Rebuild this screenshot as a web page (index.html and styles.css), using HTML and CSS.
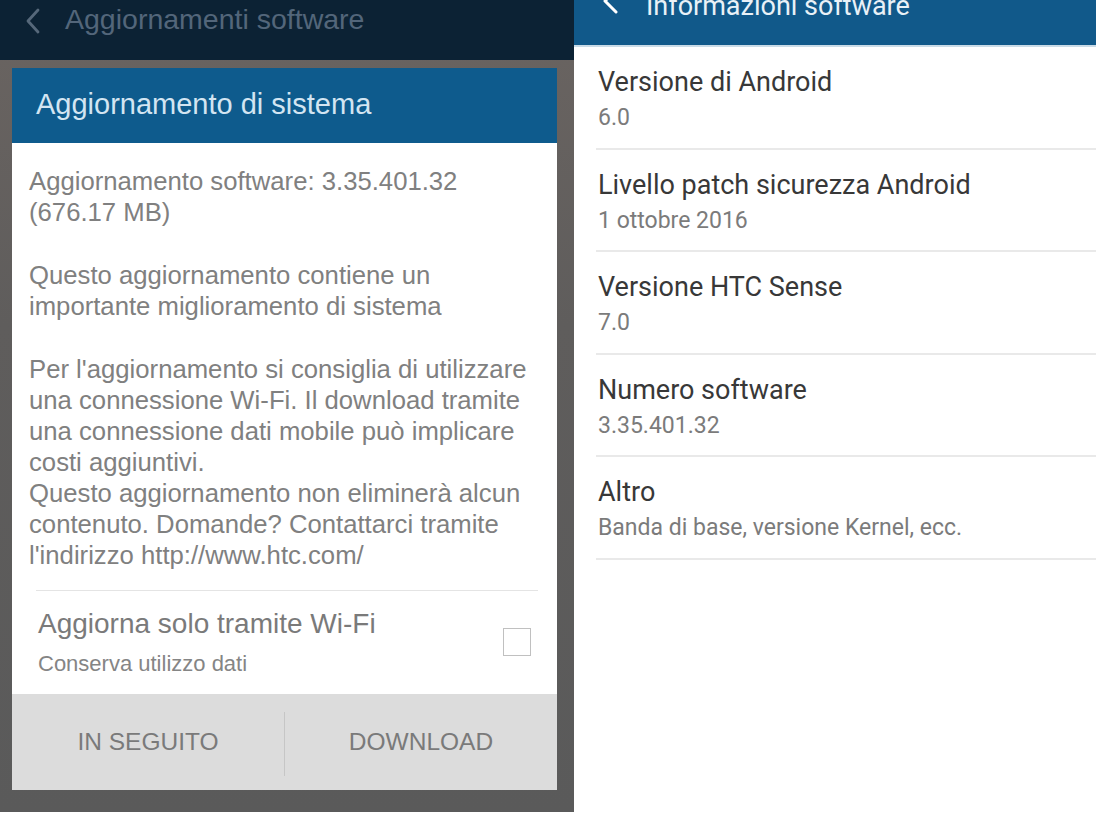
FILE: index.html
```html
<!DOCTYPE html>
<html lang="it">
<head>
<meta charset="utf-8">
<title>Aggiornamento software</title>
<link rel="stylesheet" href="styles.css">
</head>
<body>
  <section class="left">
    <header class="nav-dark">
      <svg class="chev" width="16" height="26" viewBox="0 0 16 26"><path d="M13 2 L3 13 L13 24" fill="none" stroke="#56687a" stroke-width="2.8" stroke-linecap="round" stroke-linejoin="round"/></svg>
      <span class="nav-title">Aggiornamenti software</span>
    </header>
    <div class="dialog">
      <div class="dlg-head">Aggiornamento di sistema</div>
      <div class="dlg-body">
        <p>Aggiornamento software: 3.35.401.32<br>(676.17 MB)</p>
        <p>Questo aggiornamento contiene un<br>importante miglioramento di sistema</p>
        <p>Per l'aggiornamento si consiglia di utilizzare<br>una connessione Wi-Fi. Il download tramite<br>una connessione dati mobile può implicare<br>costi aggiuntivi.<br>Questo aggiornamento non eliminerà alcun<br>contenuto. Domande? Contattarci tramite<br>l'indirizzo http://www.htc.com/</p>
        <div class="option">
          <div class="opt-text">
            <div class="opt-title">Aggiorna solo tramite Wi-Fi</div>
            <div class="opt-sub">Conserva utilizzo dati</div>
          </div>
          <span class="checkbox"></span>
        </div>
      </div>
      <div class="dlg-buttons">
        <div class="btn">IN SEGUITO</div>
        <span class="vsep"></span>
        <div class="btn">DOWNLOAD</div>
      </div>
    </div>
  </section>
  <section class="right">
    <header class="nav-blue">
      <svg class="chev-w" width="18" height="28" viewBox="0 0 18 28"><path d="M15 3 L4 14 L15 25" fill="none" stroke="#ffffff" stroke-width="3" stroke-linecap="round" stroke-linejoin="round"/></svg>
      <span class="nav-title-w">Informazioni software</span>
    </header>
    <ul class="list">
      <li class="item"><div class="it-title">Versione di Android</div><div class="it-sub">6.0</div></li>
      <li class="item"><div class="it-title">Livello patch sicurezza Android</div><div class="it-sub">1 ottobre 2016</div></li>
      <li class="item"><div class="it-title">Versione HTC Sense</div><div class="it-sub">7.0</div></li>
      <li class="item"><div class="it-title">Numero software</div><div class="it-sub">3.35.401.32</div></li>
      <li class="item"><div class="it-title">Altro</div><div class="it-sub">Banda di base, versione Kernel, ecc.</div></li>
    </ul>
  </section>
</body>
</html>
```

FILE: styles.css
```css
* { box-sizing: border-box; margin: 0; padding: 0; }
html, body { width: 1096px; height: 817px; overflow: hidden; background: #ffffff; }
body {
  display: flex;
  align-items: flex-start;
  font-family: "Liberation Sans", Arial, sans-serif;
}

/* ---------- left screen ---------- */
.left {
  width: 574px;
  height: 812px;
  background: linear-gradient(#6a6461, #5f5d5c 40%, #5a5a5a);
  display: flex;
  flex-direction: column;
}
.nav-dark {
  height: 60px;
  flex: none;
  background: #0c2234;
  display: flex;
  align-items: flex-start;
  padding: 0 0 0 25px;
}
.chev { margin-top: 8px; flex: none; }
.nav-title {
  margin-left: 24px;
  margin-top: 3px;
  font-size: 28.5px;
  line-height: 32px;
  color: #53667a;
}
.dialog {
  margin: 8px 17px 0 12px;
  display: flex;
  flex-direction: column;
  background: #ffffff;
}
.dlg-head {
  height: 75px;
  background: #0e5b8d;
  color: #d3e5f2;
  font-size: 29px;
  display: flex;
  align-items: center;
  padding: 0 0 2px 24px;
}
.dlg-body {
  height: 551px;
  padding: 23px 16px 0 17px;
  color: #808080;
  font-size: 25.7px;
  line-height: 31px;
  display: flex;
  flex-direction: column;
}
.dlg-body p { margin-bottom: 32px; white-space: nowrap; }
.dlg-body p:nth-of-type(3) { margin-bottom: 0; }
.option {
  margin: 19px 3px 0 7px;
  border-top: 1px solid #e4e4e4;
  display: flex;
  align-items: flex-start;
  justify-content: space-between;
  flex: 1;
  padding: 17px 7px 0 2px;
}
.opt-title { font-size: 28px; line-height: 32px; color: #7a7a7a; }
.opt-sub { font-size: 22px; line-height: 26px; color: #858585; margin-top: 11px; }
.checkbox {
  width: 28px;
  height: 28px;
  border: 1.5px solid #c0c0c0;
  margin-top: 20px;
}
.dlg-buttons {
  height: 96px;
  background: #dcdcdc;
  display: flex;
  align-items: center;
}
.btn {
  flex: 1;
  text-align: center;
  font-size: 24.5px;
  color: #7a7a7a;
}
.vsep { width: 1px; height: 64px; background: #c6c6c6; flex: none; margin-top: 4px; }

/* ---------- right screen ---------- */
.right {
  flex: 1;
  height: 817px;
  background: #ffffff;
  font-family: Roboto, "Noto Sans", sans-serif;
}
.nav-blue {
  height: 47px;
  background: #11598a;
  border-bottom: 2px solid #c9dbe7;
  display: flex;
  align-items: flex-start;
  padding-left: 27px;
  overflow: hidden;
}
.chev-w { margin-top: -13px; flex: none; }
.nav-title-w {
  margin-left: 27px;
  margin-top: -9px;
  font-size: 27px;
  line-height: 30px;
  color: #e9f1f7;
}
.list { list-style: none; }
.item {
  height: 102.5px;
  margin-left: 22px;
  padding: 20px 0 0 2px;
  border-bottom: 2px solid #e9e9e9;
}
.it-title { font-size: 27px; line-height: 30px; color: #383838; }
.it-sub { margin-top: 8px; font-size: 23px; line-height: 26px; color: #7b7b7b; }
```
